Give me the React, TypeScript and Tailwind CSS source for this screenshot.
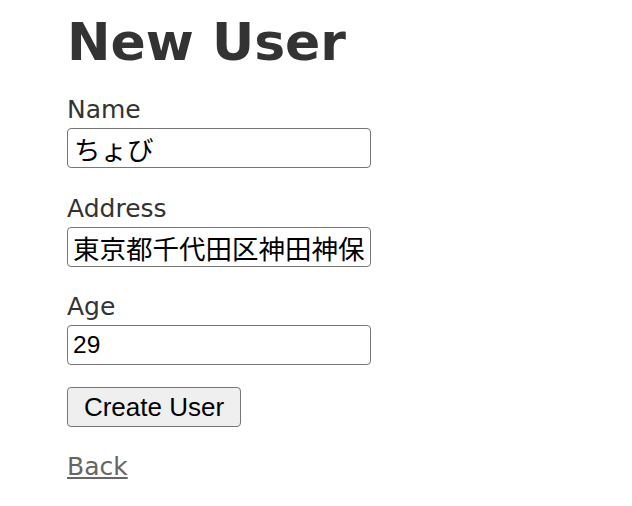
import { useState } from "react";

export default function App() {
  const [name, setName] = useState<string>("ちょび");
  const [address, setAddress] = useState<string>("東京都千代田区神田神保町1-1");
  const [age, setAge] = useState<string>("29");

  return (
    <div className="pl-[67px] pt-[16px] font-['DejaVu_Sans',Verdana,sans-serif] text-[#333] bg-white min-h-screen">
      <h1 className="m-0 text-[52px] leading-[52px] font-bold">New User</h1>
      <form className="mt-[26px] flex flex-col items-start" onSubmit={(e) => e.preventDefault()}>
        <div className="mb-[25px] flex flex-col items-start">
          <label className="block text-[25px] leading-[32px]">Name</label>
          <input
            value={name}
            onChange={(e) => setName(e.target.value)}
            className="mt-[2px] h-[40px] w-[304px] rounded-[4px] border border-[#767676] bg-white pl-[6px] pr-[5px] text-[26.5px] text-black font-['Liberation_Sans','Noto_Sans_CJK_JP',sans-serif] outline-none"
          />
        </div>
        <div className="mb-[24px] flex flex-col items-start">
          <label className="block text-[25px] leading-[32px]">Address</label>
          <input
            value={address}
            onChange={(e) => setAddress(e.target.value)}
            className="mt-[2px] h-[40px] w-[304px] rounded-[4px] border border-[#767676] bg-white px-[5px] text-[26.5px] text-black font-['Liberation_Sans','Noto_Sans_CJK_JP',sans-serif] outline-none"
          />
        </div>
        <div className="flex flex-col items-start">
          <label className="block text-[25px] leading-[32px]">Age</label>
          <input
            value={age}
            onChange={(e) => setAge(e.target.value)}
            className="mt-[2px] h-[40px] w-[304px] rounded-[4px] border border-[#767676] bg-white px-[5px] text-[24.5px] text-black font-['Liberation_Sans','Noto_Sans_CJK_JP',sans-serif] outline-none"
          />
        </div>
        <button
          type="submit"
          className="mt-[22px] h-[40px] w-[174px] rounded-[4px] border border-[#767676] bg-[#efefef] text-[26px] text-black font-['Liberation_Sans',Arial,sans-serif]"
        >
          Create User
        </button>
      </form>
      <a href="#" className="mt-[24px] inline-block text-[25px] leading-[32px] text-[#666] underline">
        Back
      </a>
    </div>
  );
}
